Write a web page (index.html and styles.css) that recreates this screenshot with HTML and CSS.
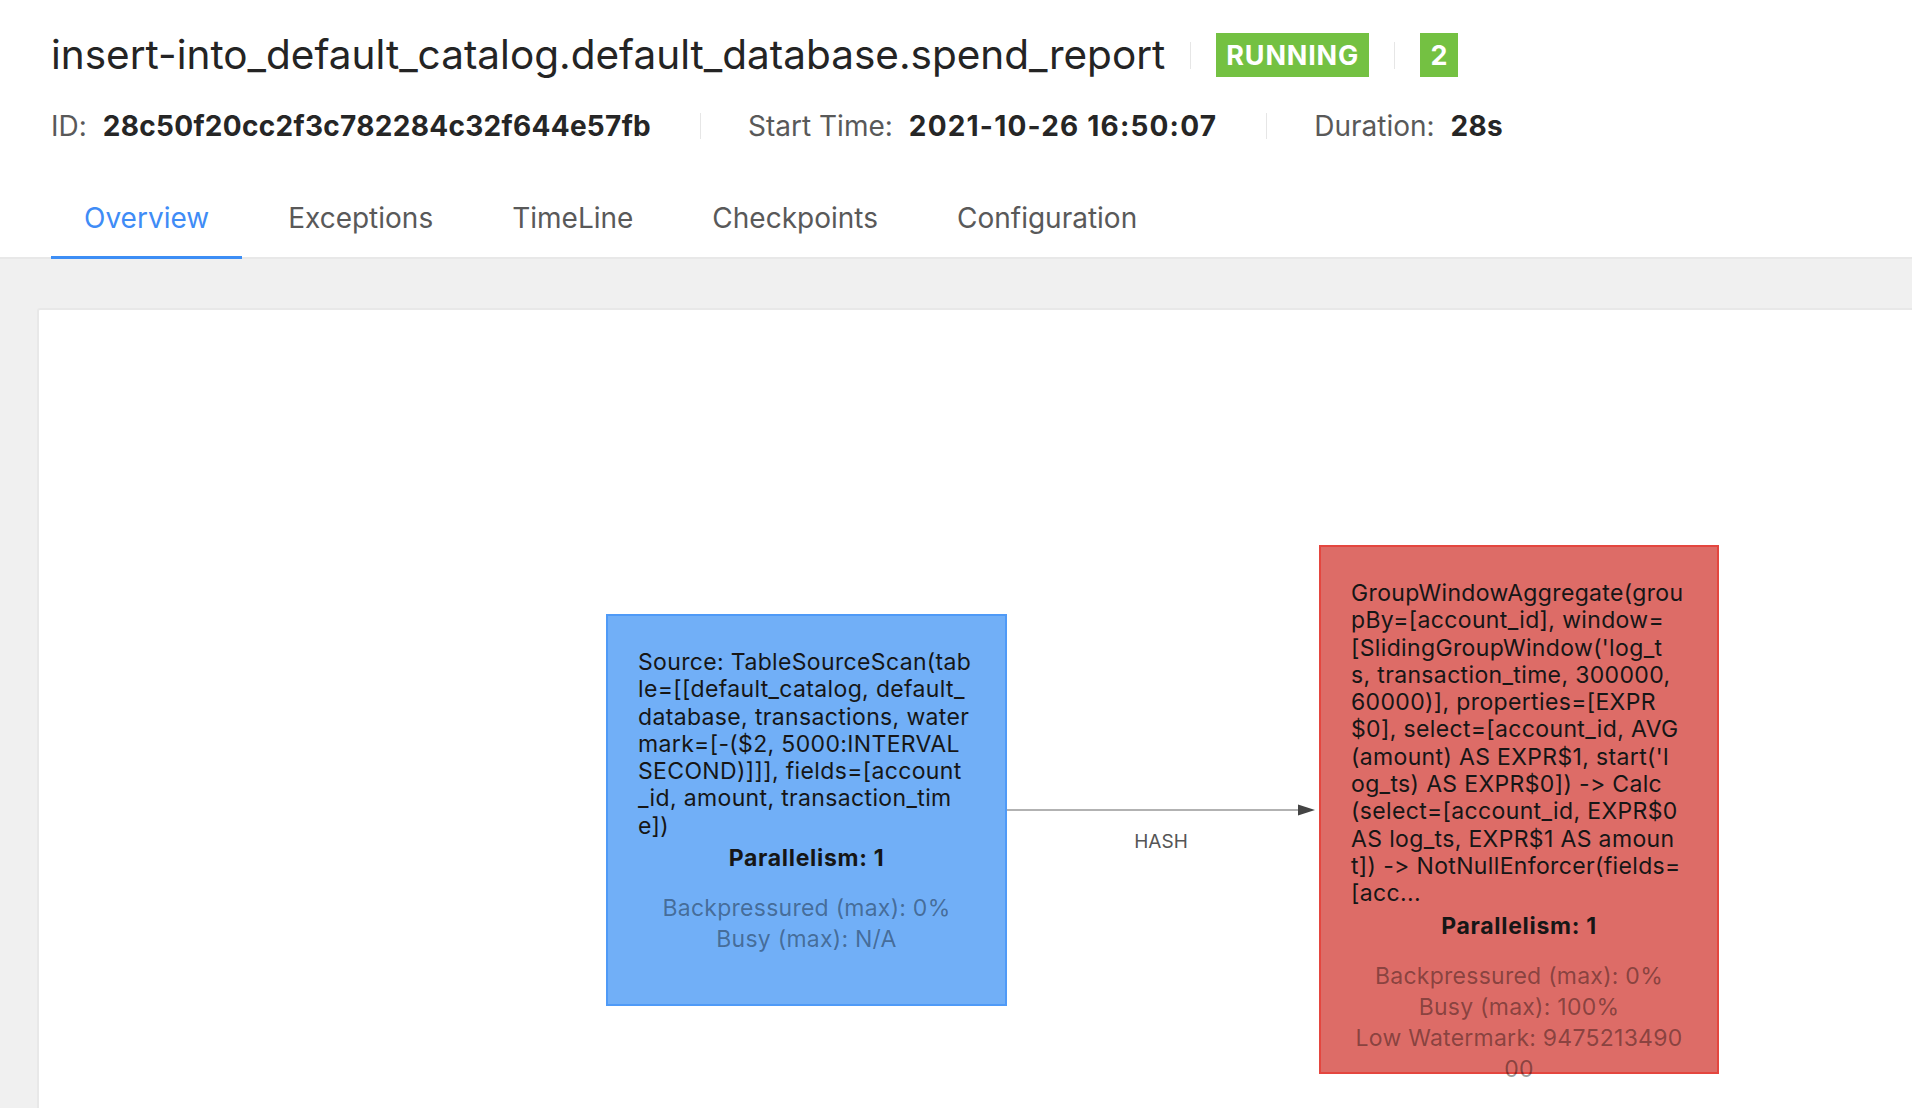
FILE: index.html
```html
<!DOCTYPE html>
<html lang="en">
<head>
<meta charset="utf-8">
<title>insert-into_default_catalog.default_database.spend_report</title>
<link rel="stylesheet" href="styles.css">
</head>
<body>
<div class="page">
  <header class="job-header">
    <div class="title-row">
      <h1 class="job-name">insert-into_default_catalog.default_database.spend_report</h1>
      <span class="divider"></span>
      <span class="badge">RUNNING</span>
      <span class="divider"></span>
      <span class="badge badge-count">2</span>
    </div>
    <div class="meta-row">
      <span class="meta"><span class="meta-label">ID:</span><span class="meta-value">28c50f20cc2f3c782284c32f644e57fb</span></span>
      <span class="divider meta-divider"></span>
      <span class="meta"><span class="meta-label">Start Time:</span><span class="meta-value meta-value-time">2021-10-26 16:50:07</span></span>
      <span class="divider meta-divider"></span>
      <span class="meta"><span class="meta-label">Duration:</span><span class="meta-value">28s</span></span>
    </div>
    <nav class="tabs">
      <a class="tab active">Overview</a>
      <a class="tab">Exceptions</a>
      <a class="tab">TimeLine</a>
      <a class="tab">Checkpoints</a>
      <a class="tab">Configuration</a>
    </nav>
  </header>
  <main class="content">
    <section class="graph-card">
      <svg class="edges" width="1400" height="800" viewBox="0 0 1400 800">
        <line x1="968" y1="500" x2="1262" y2="500" class="edge-line"/>
        <polygon points="1259,494.5 1276,500 1259,505.5" class="edge-arrow"/>
        <text x="1122" y="538" class="edge-label">HASH</text>
      </svg>
      <div class="node node-source" style="left:567px; top:304px; width:401px; height:392px;">
        <div class="node-desc">
          <span>Source: TableSourceScan(tab</span>
          <span>le=[[default_catalog, default_</span>
          <span>database, transactions, water</span>
          <span>mark=[-($2, 5000:INTERVAL</span>
          <span>SECOND)]]], fields=[account</span>
          <span>_id, amount, transaction_tim</span>
          <span>e])</span>
        </div>
        <div class="node-parallelism">Parallelism: 1</div>
        <div class="node-metrics">
          <span>Backpressured (max): 0%</span>
          <span>Busy (max): N/A</span>
        </div>
      </div>
      <div class="node node-busy" style="left:1280px; top:235px; width:400px; height:529px;">
        <div class="node-desc">
          <span>GroupWindowAggregate(grou</span>
          <span>pBy=[account_id], window=</span>
          <span>[SlidingGroupWindow('log_t</span>
          <span>s, transaction_time, 300000,</span>
          <span>60000)], properties=[EXPR</span>
          <span>$0], select=[account_id, AVG</span>
          <span>(amount) AS EXPR$1, start('l</span>
          <span>og_ts) AS EXPR$0]) -&gt; Calc</span>
          <span>(select=[account_id, EXPR$0</span>
          <span>AS log_ts, EXPR$1 AS amoun</span>
          <span>t]) -&gt; NotNullEnforcer(fields=</span>
          <span>[acc...</span>
        </div>
        <div class="node-parallelism">Parallelism: 1</div>
        <div class="node-metrics">
          <span>Backpressured (max): 0%</span>
          <span>Busy (max): 100%</span>
          <span>Low Watermark: 9475213490</span>
          <span>00</span>
        </div>
      </div>
    </section>
  </main>
</div>
</body>
</html>
```

FILE: styles.css
```css
* {
  box-sizing: border-box;
}

html, body {
  margin: 0;
  padding: 0;
  height: 100%;
  overflow: hidden;
  background: #ffffff;
}

body {
  font-family: Inter, "Noto Sans", "Liberation Sans", sans-serif;
  font-feature-settings: "calt" 0, "liga" 0;
  font-variant-ligatures: none;
  color: #262626;
}

.page {
  height: 100vh;
  display: flex;
  flex-direction: column;
}

/* ---------- header ---------- */
.job-header {
  background: #ffffff;
  border-bottom: 2px solid #e8e8e8;
  padding: 33px 0 0 51px;
}

.title-row {
  display: flex;
  align-items: center;
  height: 44px;
}

.job-name {
  margin: 0;
  font-size: 40.5px;
  font-weight: 400;
  line-height: 44px;
  color: #242424;
}

.divider {
  display: inline-block;
  width: 1px;
  height: 27px;
  background: #e6e6e6;
  margin: 0 25px;
}

.badge {
  display: inline-flex;
  align-items: center;
  justify-content: center;
  height: 44px;
  padding: 0 10px;
  background: #74c142;
  color: #ffffff;
  font-size: 27px;
  font-weight: 700;
  letter-spacing: 0.8px;
}

.badge-count {
  width: 38px;
  padding: 0;
  letter-spacing: 0;
}

.meta-row {
  display: flex;
  align-items: center;
  height: 34px;
  margin-top: 32px;
}

.meta {
  display: flex;
  align-items: center;
  font-size: 28px;
  line-height: 34px;
}

.meta-label {
  color: #595959;
  margin-right: 16px;
}

.meta-value {
  color: #262626;
  font-weight: 700;
  letter-spacing: 0.3px;
}

.meta-value-time {
  letter-spacing: 1.2px;
}

.meta-divider {
  height: 26px;
  margin: 0 47px 0 49px;
}

.tabs {
  display: flex;
  gap: 13px;
  margin-top: 34px;
  margin-bottom: -2px;
}

.tab {
  padding: 24px 33px 21px;
  font-size: 28px;
  line-height: 34px;
  color: #595959;
  border-bottom: 3px solid transparent;
  cursor: pointer;
}

.tab.active {
  color: #3f8cf6;
  border-bottom-color: #3d8ef5;
}

/* ---------- content ---------- */
.content {
  flex: 1;
  display: flex;
  background: #f0f0f0;
  padding: 49px 0 0 37px;
}

.graph-card {
  position: relative;
  flex: 1;
  height: 900px;
  margin-right: -20px;
  background: #ffffff;
  border: 2px solid #e8e8e8;
  border-radius: 3px;
}

.edges {
  position: absolute;
  left: 0;
  top: 0;
  overflow: visible;
}

.edge-line {
  stroke: #999999;
  stroke-width: 1.6;
}

.edge-arrow {
  fill: #444444;
}

.edge-label {
  font-family: Inter, "Noto Sans", "Liberation Sans", sans-serif;
  font-size: 19px;
  fill: #555555;
  text-anchor: middle;
}

/* ---------- nodes ---------- */
.node {
  position: absolute;
  padding: 33px 0 0 30px;
  border: 2px solid;
  color: #161616;
}

.node-source {
  background: #71aff7;
  border-color: #4f9af7;
}

.node-busy {
  background: #dd6c67;
  border-color: #e4463f;
}

.node-desc {
  font-size: 23px;
  line-height: 27.3px;
  letter-spacing: 0.35px;
}

.node-desc span {
  display: block;
  white-space: pre;
}

.node-parallelism {
  margin: 3px 0 0 -30px;
  text-align: center;
  font-size: 23px;
  font-weight: 700;
  line-height: 30px;
  letter-spacing: 0.7px;
}

.node-metrics {
  margin: 20px 0 0 -30px;
  text-align: center;
  font-size: 23px;
  line-height: 31px;
  letter-spacing: 0.25px;
  color: rgba(0, 0, 0, 0.4);
}

.node-metrics span {
  display: block;
  white-space: pre;
}
```
